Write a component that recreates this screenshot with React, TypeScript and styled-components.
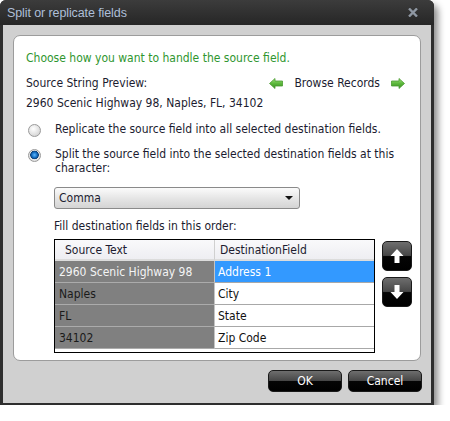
import { createGlobalStyle } from 'styled-components';
import styled from 'styled-components';

const GlobalStyle = createGlobalStyle`
  html, body {
    margin: 0;
    padding: 0;
    background: #ffffff;
  }

  body {
    font-family: 'DejaVu Sans Condensed', 'Liberation Sans', Arial, sans-serif;
    font-size: 12px;
  }
`;

const Window = styled.div`
  width: 434px;
  height: 405px;
  display: flex;
  flex-direction: column;
  background: #2e2e2e;
  border-radius: 6px 6px 0 0;
  box-shadow: 4px 5px 7px rgba(0, 0, 0, 0.45);
`;

const TitleBar = styled.div`
  height: 25px;
  flex: none;
  display: flex;
  align-items: center;
  justify-content: space-between;
  padding: 0 16px 0 7px;
  background: linear-gradient(#3c3c3c, #262626);
  border-radius: 6px 6px 0 0;
`;

const Title = styled.span`
  color: #aebfd8;
  font-family: 'Liberation Sans', Arial, sans-serif;
  font-size: 12.5px;
  letter-spacing: -0.1px;
`;

const Body = styled.div`
  flex: 1;
  margin: 0 3px 2px 3px;
  padding: 10px;
  background: #d0d0d0;
  display: flex;
  flex-direction: column;
`;

const Panel = styled.div`
  height: 326px;
  box-sizing: border-box;
  background: #ffffff;
  border: 1px solid #9c9c9c;
  border-radius: 7px;
  padding: 14px 13px 0 12px;
  display: flex;
  flex-direction: column;
  color: #1c1c30;
`;

const Heading = styled.div`
  line-height: 16px;
  color: #2f962f;
`;

const Line = styled.div<{ $top: number; $indent?: number }>`
  line-height: 16px;
  margin-top: ${({ $top }) => $top}px;
  margin-left: ${({ $indent = 0 }) => $indent}px;
`;

const PreviewRow = styled.div`
  display: flex;
  align-items: center;
  justify-content: space-between;
  line-height: 16px;
  margin-top: 9px;
`;

const Browse = styled.div`
  display: flex;
  align-items: center;
  gap: 11px;
  margin-right: 2px;
`;

const RadioRow = styled.label<{ $top: number }>`
  display: flex;
  align-items: flex-start;
  gap: 14px;
  margin-top: ${({ $top }) => $top}px;
  line-height: 14px;
`;

const RadioDot = styled.span<{ $checked?: boolean }>`
  flex: none;
  width: 11px;
  height: 11px;
  margin: 2px 0 0 2px;
  border-radius: 50%;
  border: 1px solid #9a9a9a;
  background: ${({ $checked }) =>
    $checked
      ? 'radial-gradient(circle at 50% 45%, #5fb8ff 0, #1773c8 2.5px, #0c3f78 4px, #e8e8e8 4.6px, #d6d6d6 100%)'
      : 'radial-gradient(circle at 40% 35%, #ffffff 0, #e4e4e4 50%, #c8c8c8 100%)'};
`;

const Select = styled.div`
  width: 246px;
  height: 22px;
  box-sizing: border-box;
  margin: 12px 0 0 28px;
  padding: 0 6px 0 4px;
  display: flex;
  align-items: center;
  justify-content: space-between;
  border: 1px solid #8a8a8a;
  border-radius: 3px;
  background: linear-gradient(#fbfbfb, #e4e4e4 55%, #d4d4d4);
`;

const Caret = styled.span`
  width: 0;
  height: 0;
  border-left: 4px solid transparent;
  border-right: 4px solid transparent;
  border-top: 4px solid #111;
`;

const TableArea = styled.div`
  display: flex;
  align-items: flex-start;
  gap: 7px;
  margin: 5px 0 0 28px;
`;

const Table = styled.div`
  width: 321px;
  height: 114px;
  box-sizing: border-box;
  border: 1px solid #000;
  background: #ffffff;
  display: grid;
  grid-template-columns: 160px 159px;
  grid-template-rows: 21px repeat(4, 22px);
  align-content: start;
`;

const HeaderCell = styled.div<{ $indent: number; $divider?: boolean }>`
  display: flex;
  align-items: center;
  padding-left: ${({ $indent }) => $indent}px;
  background: linear-gradient(#f9f9fb, #eeeef2);
  border-bottom: 2px solid #dcdcdc;
  border-right: ${({ $divider }) => ($divider ? '1px solid #d0d0d0' : 'none')};
  box-sizing: border-box;
`;

const SourceCell = styled.div<{ $selected?: boolean }>`
  display: flex;
  align-items: center;
  padding-left: 4px;
  background: #808080;
  color: ${({ $selected }) => ($selected ? '#f4f4f4' : '#1a1a1a')};
  border-bottom: 1px solid #ababab;
  border-right: 1px solid #c4c4c4;
  box-sizing: border-box;
`;

const DestCell = styled.div<{ $selected?: boolean }>`
  display: flex;
  align-items: center;
  padding-left: 3px;
  background: ${({ $selected }) => ($selected ? '#3399ff' : '#ffffff')};
  color: ${({ $selected }) => ($selected ? '#ffffff' : '#111111')};
  border-bottom: 1px solid #a8a8a8;
  box-sizing: border-box;
`;

const MoveButtons = styled.div`
  display: flex;
  flex-direction: column;
  gap: 6px;
  margin-top: 2px;
`;

const GlossButton = styled.button<{ $width: number }>`
  width: ${({ $width }) => $width}px;
  height: ${({ $width }) => ($width === 30 ? 30 : 22)}px;
  padding: 0;
  display: flex;
  align-items: center;
  justify-content: center;
  border: 1px solid #1a1a1a;
  border-radius: 5px;
  background: linear-gradient(#6e6e6e, #474747 48%, #050505 52%, #000 100%);
  color: #ffffff;
  font-family: 'DejaVu Sans Condensed', 'Liberation Sans', Arial, sans-serif;
  font-size: 12px;
  cursor: pointer;
`;

const Footer = styled.div`
  display: flex;
  justify-content: flex-end;
  gap: 6px;
  margin-top: 9px;
  margin-right: -1px;
`;

function GreenArrow({ dir }: { dir: 'left' | 'right' }) {
  return (
    <svg width="14" height="11" viewBox="0 0 14 11">
      <defs>
        <linearGradient id={`g-${dir}`} x1="0" y1="0" x2="0" y2="1">
          <stop offset="0" stopColor="#9ee07a" />
          <stop offset="0.5" stopColor="#5cb83c" />
          <stop offset="1" stopColor="#3a8f25" />
        </linearGradient>
      </defs>
      <polygon
        points={dir === 'left' ? '0.5,5.5 6,0.5 6,3 13.5,3 13.5,8 6,8 6,10.5' : '13.5,5.5 8,0.5 8,3 0.5,3 0.5,8 8,8 8,10.5'}
        fill={`url(#g-${dir})`}
        stroke="#4a9a30"
        strokeWidth="0.8"
        strokeLinejoin="round"
      />
    </svg>
  );
}

function MoveArrow({ up }: { up?: boolean }) {
  return (
    <svg width="14" height="16" viewBox="0 0 14 16" style={{ transform: up ? 'none' : 'rotate(180deg)' }}>
      <polygon points="7,1 13.5,8 9.5,8 9.5,15 4.5,15 4.5,8 0.5,8" fill="#ffffff" />
    </svg>
  );
}

const rows = [
  { source: '2960 Scenic Highway 98', dest: 'Address 1' },
  { source: 'Naples', dest: 'City' },
  { source: 'FL', dest: 'State' },
  { source: '34102', dest: 'Zip Code' },
];

export default function App() {
  return (
    <>
      <GlobalStyle />
      <Window>
        <TitleBar>
          <Title>Split or replicate fields</Title>
          <svg width="10" height="9" viewBox="0 0 10 9">
            <path d="M1 0.5 L9 8.5 M9 0.5 L1 8.5" stroke="#8f98a3" strokeWidth="2.4" />
          </svg>
        </TitleBar>
        <Body>
          <Panel>
            <Heading>Choose how you want to handle the source field.</Heading>
            <PreviewRow>
              <span>Source String Preview:</span>
              <Browse>
                <GreenArrow dir="left" />
                <span>Browse Records</span>
                <GreenArrow dir="right" />
              </Browse>
            </PreviewRow>
            <Line $top={4}>2960 Scenic Highway 98, Naples, FL, 34102</Line>
            <RadioRow $top={11}>
              <RadioDot />
              <span>Replicate the source field into all selected destination fields.</span>
            </RadioRow>
            <RadioRow $top={10}>
              <RadioDot $checked />
              <span>
                Split the source field into the selected destination fields at this
                <br />
                character:
              </span>
            </RadioRow>
            <Select>
              <span>Comma</span>
              <Caret />
            </Select>
            <Line $top={9} $indent={28}>
              Fill destination fields in this order:
            </Line>
            <TableArea>
              <Table>
                <HeaderCell $indent={10} $divider>
                  Source Text
                </HeaderCell>
                <HeaderCell $indent={5}>DestinationField</HeaderCell>
                {rows.map((row, i) => (
                  <>
                    <SourceCell key={`s${i}`} $selected={i === 0}>
                      {row.source}
                    </SourceCell>
                    <DestCell key={`d${i}`} $selected={i === 0}>
                      {row.dest}
                    </DestCell>
                  </>
                ))}
              </Table>
              <MoveButtons>
                <GlossButton $width={30}>
                  <MoveArrow up />
                </GlossButton>
                <GlossButton $width={30}>
                  <MoveArrow />
                </GlossButton>
              </MoveButtons>
            </TableArea>
          </Panel>
          <Footer>
            <GlossButton $width={74}>OK</GlossButton>
            <GlossButton $width={74}>Cancel</GlossButton>
          </Footer>
        </Body>
      </Window>
    </>
  );
}
